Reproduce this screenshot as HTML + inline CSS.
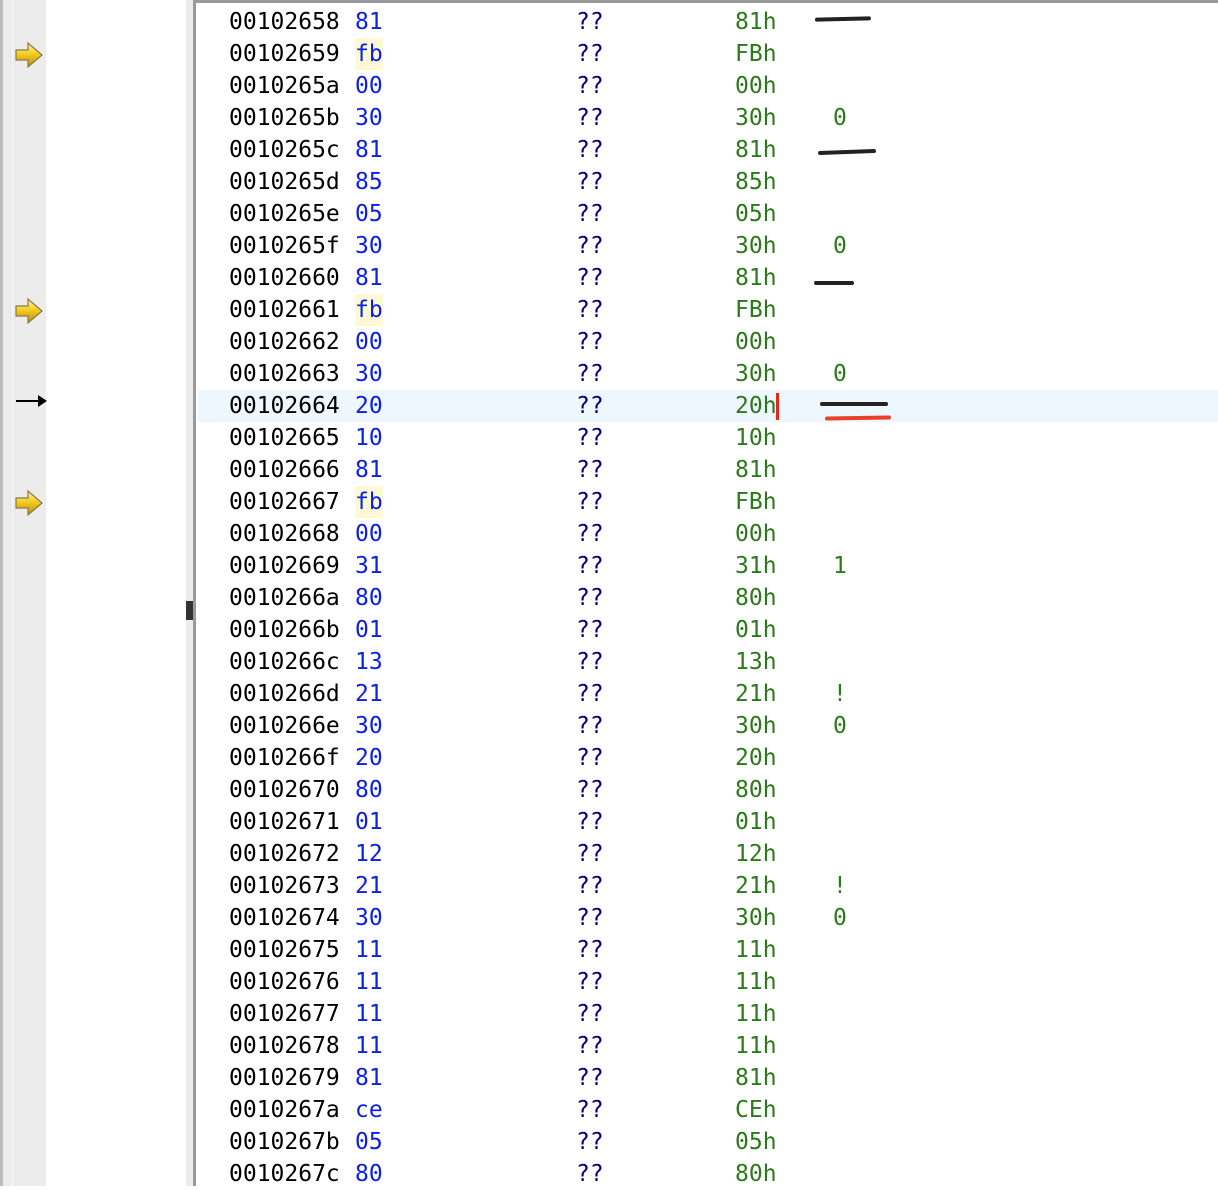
<!DOCTYPE html>
<html><head><meta charset="utf-8"><style>
body{margin:0;width:1218px;height:1186px;overflow:hidden;background:#fff;position:relative;font-family:"DejaVu Sans Mono","Liberation Mono",monospace;font-size:23px}
.g{position:absolute;left:0;top:0;width:46px;height:1186px;background:#ececec}
.g1{position:absolute;left:0;top:0;width:3px;height:1186px;background:#bbb}
.g2{position:absolute;left:12px;top:0;width:1px;height:1186px;background:#f8f8f8}
.bar{position:absolute;left:186px;top:0;width:7px;height:1186px;background:#ececec}
.bl{position:absolute;left:193px;top:0;width:3px;height:1186px;background:#9a9a9a}
.tb{position:absolute;left:196px;top:0;width:1022px;height:3px;background:#9a9a9a}
.r{position:absolute;left:198px;width:1020px;height:32px;line-height:32px}
.r span{position:absolute;top:0;white-space:pre}
.a{left:31px;color:#000}
.b{left:157px;color:#0a1ee6}
.q{left:378px;color:#000080}
.v{left:537px;color:#2b7a1a}
.c{left:635px;color:#2b7a1a}
.fb{background:#fdf8d6}
.hl{background:#eef6fe}
.arr{position:absolute;left:15px}
.mk{position:absolute;height:4px;border-radius:2px;background:#222}
</style></head><body>
<div class="g"></div><div class="g1"></div><div class="g2"></div>
<div class="bar"></div><div class="bl"></div><div class="tb"></div>
<div style="position:absolute;left:186px;top:601px;width:7px;height:19px;background:#333"></div>

<svg class="arr" style="top:41px" width="30" height="28" viewBox="0 0 30 28"><defs><linearGradient id="y" x1="0" y1="0" x2="0" y2="1"><stop offset="0" stop-color="#fff6a0"/><stop offset=".5" stop-color="#f2c81e"/><stop offset="1" stop-color="#b08a10"/></linearGradient></defs><path d="M1 9h12V2l14 12-14 12v-7H1z" fill="url(#y)" stroke="#8a7a40" stroke-width="1.2"/></svg>
<svg class="arr" style="top:297px" width="30" height="28" viewBox="0 0 30 28"><path d="M1 9h12V2l14 12-14 12v-7H1z" fill="url(#y)" stroke="#8a7a40" stroke-width="1.2"/></svg>
<svg class="arr" style="top:489px" width="30" height="28" viewBox="0 0 30 28"><path d="M1 9h12V2l14 12-14 12v-7H1z" fill="url(#y)" stroke="#8a7a40" stroke-width="1.2"/></svg>
<svg style="position:absolute;left:16px;top:393px" width="32" height="16"><path d="M0 8h24" stroke="#000" stroke-width="2"/><path d="M22 2l9 6-9 6z" fill="#000"/></svg>

<div class="r" style="top:6px"><span class="a">00102658</span><span class="b">81</span><span class="q">??</span><span class="v">81h</span></div>
<div class="r" style="top:38px"><span class="a">00102659</span><span class="b fb">fb</span><span class="q">??</span><span class="v">FBh</span></div>
<div class="r" style="top:70px"><span class="a">0010265a</span><span class="b">00</span><span class="q">??</span><span class="v">00h</span></div>
<div class="r" style="top:102px"><span class="a">0010265b</span><span class="b">30</span><span class="q">??</span><span class="v">30h</span><span class="c">0</span></div>
<div class="r" style="top:134px"><span class="a">0010265c</span><span class="b">81</span><span class="q">??</span><span class="v">81h</span></div>
<div class="r" style="top:166px"><span class="a">0010265d</span><span class="b">85</span><span class="q">??</span><span class="v">85h</span></div>
<div class="r" style="top:198px"><span class="a">0010265e</span><span class="b">05</span><span class="q">??</span><span class="v">05h</span></div>
<div class="r" style="top:230px"><span class="a">0010265f</span><span class="b">30</span><span class="q">??</span><span class="v">30h</span><span class="c">0</span></div>
<div class="r" style="top:262px"><span class="a">00102660</span><span class="b">81</span><span class="q">??</span><span class="v">81h</span></div>
<div class="r" style="top:294px"><span class="a">00102661</span><span class="b fb">fb</span><span class="q">??</span><span class="v">FBh</span></div>
<div class="r" style="top:326px"><span class="a">00102662</span><span class="b">00</span><span class="q">??</span><span class="v">00h</span></div>
<div class="r" style="top:358px"><span class="a">00102663</span><span class="b">30</span><span class="q">??</span><span class="v">30h</span><span class="c">0</span></div>
<div class="r hl" style="top:390px"><span class="a">00102664</span><span class="b">20</span><span class="q">??</span><span class="v">20h</span><span style="left:578px;top:3px;width:3px;height:27px;background:#e8261a"></span></div>
<div class="r" style="top:422px"><span class="a">00102665</span><span class="b">10</span><span class="q">??</span><span class="v">10h</span></div>
<div class="r" style="top:454px"><span class="a">00102666</span><span class="b">81</span><span class="q">??</span><span class="v">81h</span></div>
<div class="r" style="top:486px"><span class="a">00102667</span><span class="b fb">fb</span><span class="q">??</span><span class="v">FBh</span></div>
<div class="r" style="top:518px"><span class="a">00102668</span><span class="b">00</span><span class="q">??</span><span class="v">00h</span></div>
<div class="r" style="top:550px"><span class="a">00102669</span><span class="b">31</span><span class="q">??</span><span class="v">31h</span><span class="c">1</span></div>
<div class="r" style="top:582px"><span class="a">0010266a</span><span class="b">80</span><span class="q">??</span><span class="v">80h</span></div>
<div class="r" style="top:614px"><span class="a">0010266b</span><span class="b">01</span><span class="q">??</span><span class="v">01h</span></div>
<div class="r" style="top:646px"><span class="a">0010266c</span><span class="b">13</span><span class="q">??</span><span class="v">13h</span></div>
<div class="r" style="top:678px"><span class="a">0010266d</span><span class="b">21</span><span class="q">??</span><span class="v">21h</span><span class="c">!</span></div>
<div class="r" style="top:710px"><span class="a">0010266e</span><span class="b">30</span><span class="q">??</span><span class="v">30h</span><span class="c">0</span></div>
<div class="r" style="top:742px"><span class="a">0010266f</span><span class="b">20</span><span class="q">??</span><span class="v">20h</span></div>
<div class="r" style="top:774px"><span class="a">00102670</span><span class="b">80</span><span class="q">??</span><span class="v">80h</span></div>
<div class="r" style="top:806px"><span class="a">00102671</span><span class="b">01</span><span class="q">??</span><span class="v">01h</span></div>
<div class="r" style="top:838px"><span class="a">00102672</span><span class="b">12</span><span class="q">??</span><span class="v">12h</span></div>
<div class="r" style="top:870px"><span class="a">00102673</span><span class="b">21</span><span class="q">??</span><span class="v">21h</span><span class="c">!</span></div>
<div class="r" style="top:902px"><span class="a">00102674</span><span class="b">30</span><span class="q">??</span><span class="v">30h</span><span class="c">0</span></div>
<div class="r" style="top:934px"><span class="a">00102675</span><span class="b">11</span><span class="q">??</span><span class="v">11h</span></div>
<div class="r" style="top:966px"><span class="a">00102676</span><span class="b">11</span><span class="q">??</span><span class="v">11h</span></div>
<div class="r" style="top:998px"><span class="a">00102677</span><span class="b">11</span><span class="q">??</span><span class="v">11h</span></div>
<div class="r" style="top:1030px"><span class="a">00102678</span><span class="b">11</span><span class="q">??</span><span class="v">11h</span></div>
<div class="r" style="top:1062px"><span class="a">00102679</span><span class="b">81</span><span class="q">??</span><span class="v">81h</span></div>
<div class="r" style="top:1094px"><span class="a">0010267a</span><span class="b">ce</span><span class="q">??</span><span class="v">CEh</span></div>
<div class="r" style="top:1126px"><span class="a">0010267b</span><span class="b">05</span><span class="q">??</span><span class="v">05h</span></div>
<div class="r" style="top:1158px"><span class="a">0010267c</span><span class="b">80</span><span class="q">??</span><span class="v">80h</span></div>

<div class="mk" style="left:815px;top:17px;width:56px;transform:rotate(-1.5deg)"></div>
<div class="mk" style="left:818px;top:150px;width:58px;transform:rotate(-2deg)"></div>
<div class="mk" style="left:814px;top:281px;width:40px"></div>
<div class="mk" style="left:820px;top:402px;width:68px"></div>
<div class="mk" style="left:825px;top:416px;width:66px;background:#e8402a;transform:rotate(-1deg)"></div>
</body></html>
